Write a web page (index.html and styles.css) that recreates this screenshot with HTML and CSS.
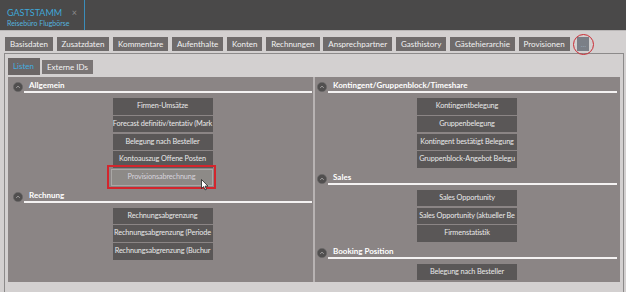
FILE: index.html
```html
<!DOCTYPE html>
<html lang="de">
<head>
  <meta charset="UTF-8" />
  <title>Gaststamm</title>
  <link rel="stylesheet" href="styles.css">
</head>
<body>

  <div class="topbar">
    <div class="doc-tab">
      <div class="doc-title">GASTSTAMM <span class="doc-close">×</span></div>
      <div class="doc-sub">Reisebüro Flugbörse</div>
    </div>
  </div>

  <div class="workspace">
    <div class="tabs">
      <span class="tab">Basisdaten</span>
      <span class="tab">Zusatzdaten</span>
      <span class="tab">Kommentare</span>
      <span class="tab">Aufenthalte</span>
      <span class="tab">Konten</span>
      <span class="tab">Rechnungen</span>
      <span class="tab">Ansprechpartner</span>
      <span class="tab">Gasthistory</span>
      <span class="tab">Gästehierarchie</span>
      <span class="tab">Provisionen</span>
      <span class="tab more">…</span>
    </div>

    <div class="panel">
      <div class="subtabs">
        <span class="subtab active">Listen</span>
        <span class="subtab">Externe IDs</span>
      </div>

      <div class="lists">
        <!-- left column -->
        <div class="col left">
          <div class="group-head">
            <svg class="toggle" viewBox="0 0 10 10"><circle cx="5" cy="5" r="4.6"/><path d="M3.2 5.8 L5 4.2 L6.8 5.8"/></svg>
            <div class="group-title">Allgemein</div>
          </div>
          <div class="group-items">
            <div class="btn">Firmen-Umsätze</div>
            <div class="btn">Forecast definitiv/tentativ (Mark</div>
            <div class="btn">Belegung nach Besteller</div>
            <div class="btn">Kontoauszug Offene Posten</div>
            <div class="btn hover">Provisionsabrechnung</div>
          </div>

          <div class="group-head">
            <svg class="toggle" viewBox="0 0 10 10"><circle cx="5" cy="5" r="4.6"/><path d="M3.2 5.8 L5 4.2 L6.8 5.8"/></svg>
            <div class="group-title">Rechnung</div>
          </div>
          <div class="group-items">
            <div class="btn">Rechnungsabgrenzung</div>
            <div class="btn">Rechnungsabgrenzung (Periode</div>
            <div class="btn">Rechnungsabgrenzung (Buchur</div>
          </div>
        </div>

        <!-- right column -->
        <div class="col right">
          <div class="group-head">
            <svg class="toggle" viewBox="0 0 10 10"><circle cx="5" cy="5" r="4.6"/><path d="M3.2 5.8 L5 4.2 L6.8 5.8"/></svg>
            <div class="group-title">Kontingent/Gruppenblock/Timeshare</div>
          </div>
          <div class="group-items">
            <div class="btn">Kontingentbelegung</div>
            <div class="btn">Gruppenbelegung</div>
            <div class="btn">Kontingent bestätigt Belegung</div>
            <div class="btn">Gruppenblock-Angebot Belegu</div>
          </div>

          <div class="group-head">
            <svg class="toggle" viewBox="0 0 10 10"><circle cx="5" cy="5" r="4.6"/><path d="M3.2 5.8 L5 4.2 L6.8 5.8"/></svg>
            <div class="group-title">Sales</div>
          </div>
          <div class="group-items">
            <div class="btn">Sales Opportunity</div>
            <div class="btn">Sales Opportunity (aktueller Be</div>
            <div class="btn">Firmenstatistik</div>
          </div>

          <div class="group-head">
            <svg class="toggle" viewBox="0 0 10 10"><circle cx="5" cy="5" r="4.6"/><path d="M3.2 5.8 L5 4.2 L6.8 5.8"/></svg>
            <div class="group-title">Booking Position</div>
          </div>
          <div class="group-items">
            <div class="btn">Belegung nach Besteller</div>
          </div>
        </div>
      </div>
    </div>
  </div>

  <svg class="cursor" viewBox="0 0 8 12" width="8" height="12">
    <path d="M0.5 0.5 L0.5 9.5 L2.6 7.6 L4 10.9 L5.4 10.3 L4.1 7.1 L7 7.1 Z"/>
  </svg>

</body>
</html>
```

FILE: styles.css
```css
* {
  box-sizing: border-box;
  margin: 0;
  padding: 0;
  font-family: "Lato", "Open Sans", sans-serif;
}

body {
  background: #d3d0d0;
  width: 626px;
  height: 292px;
  overflow: hidden;
  position: relative;
}

.topbar {
  height: 31px;
  background: #4a4949;
  border-bottom: 1px solid #b9b6b6;
}

.doc-tab {
  width: 85px;
  height: 30px;
  border-right: 1px solid #3b8dba;
  padding: 7px 0 0 7px;
}

.doc-title {
  display: flex;
  justify-content: space-between;
  padding-right: 7px;
  font-size: 9px;
  line-height: 11px;
  color: #3fa7d8;
}

.doc-close {
  color: #8c8c8c;
  font-size: 9px;
}

.doc-sub {
  margin-top: 1px;
  font-size: 7px;
  line-height: 9px;
  color: #55b3df;
}

.workspace {
  padding: 4px 2px 0 4px;
}

.tabs {
  display: flex;
  gap: 3.7px;
  height: 18px;
  padding: 2px 0 0 1px;
}

.tab {
  background: #6f6b6b;
  color: #f2f2f2;
  font-size: 8px;
  height: 14px;
  line-height: 14px;
  padding: 0 5px;
}

.tab.more {
  position: relative;
  margin-left: 4px;
  width: 12px;
  padding: 0;
  text-align: center;
  background: #7b7f87;
  color: #9aa7b8;
  font-size: 7px;
}

.tab.more::after {
  content: "";
  position: absolute;
  left: -4px;
  top: -3px;
  width: 19px;
  height: 19px;
  border: 1.5px solid #cc2b34;
  border-radius: 50%;
}

.panel {
  border: 1px solid #8c8a8a;
  height: 240px;
  padding: 3px 3px 0 3px;
}

.subtabs {
  display: flex;
  gap: 2px;
  height: 20px;
  padding-top: 1px;
}

.subtab {
  background: #7a7575;
  color: #f2f2f2;
  font-size: 8px;
  height: 14px;
  line-height: 14px;
  margin-top: 2px;
  padding: 0 5px;
}

.subtab.active {
  background: #6b6666;
  color: #43aee0;
  height: 17px;
  line-height: 17px;
  margin-top: 0;
  width: 32px;
}

.lists {
  display: grid;
  grid-template-columns: 307px 1fr;
  background: #8b8585;
  height: 205px;
}

.col.left {
  border-right: 2px solid #b8b3b3;
  padding: 3px 1px 0 5px;
}

.col.right {
  padding: 3px 3px 0 2px;
}

.group-head {
  display: flex;
  align-items: center;
  height: 13px;
  margin-top: 4px;
}

.group-head:first-child {
  margin-top: 0;
}

.toggle {
  width: 10px;
  height: 10px;
  margin-top: 1px;
}

.toggle circle {
  fill: #514f4f;
  stroke: #686666;
  stroke-width: 0.6;
}

.toggle path {
  fill: none;
  stroke: #a8a6a6;
  stroke-width: 0.9;
}

.group-title {
  flex: 1;
  margin-left: 1px;
  padding-left: 5px;
  height: 13px;
  line-height: 11px;
  border-bottom: 2px solid #f4f2f2;
  color: #ffffff;
  font-size: 8px;
  font-weight: bold;
}

.group-items {
  display: flex;
  flex-direction: column;
  align-items: center;
  gap: 1.25px;
  padding-top: 5px;
}

.btn {
  position: relative;
  width: 100px;
  height: 16.5px;
  line-height: 16.5px;
  background: #5a5757;
  color: #e9e9e9;
  font-size: 7.3px;
  letter-spacing: -0.12px;
  text-align: center;
  white-space: nowrap;
  overflow: hidden;
}

.btn.hover {
  overflow: visible;
  width: 102px;
  margin-left: -2px;
  background: #8d8a87;
  border: 1px solid #a9a7a5;
  line-height: 14.5px;
  color: #d6d2dc;
}

.btn.hover::after {
  content: "";
  position: absolute;
  top: -5px;
  left: -5px;
  right: -4px;
  bottom: -4px;
  border: 2px solid #d3262d;
}

.cursor {
  position: absolute;
  left: 201px;
  top: 179px;
}

.cursor path {
  fill: #ffffff;
  stroke: #222222;
  stroke-width: 0.8;
}
```
